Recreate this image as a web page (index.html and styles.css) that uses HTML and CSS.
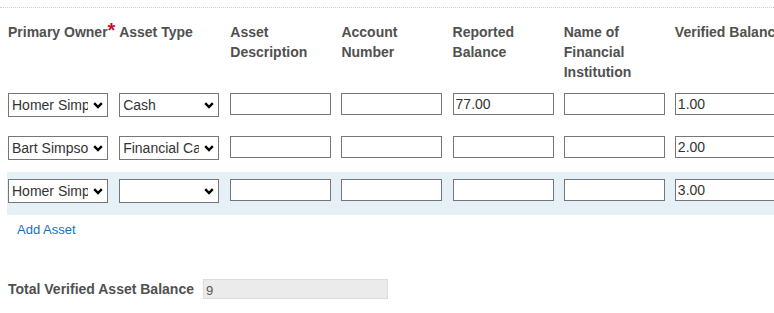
FILE: index.html
```html
<!DOCTYPE html>
<html lang="en">
<head>
<meta charset="utf-8">
<title>Assets</title>
<link rel="stylesheet" href="styles.css">
</head>
<body>
<div class="divider"></div>
<div class="grid head">
  <div class="hcell nowrap">Primary Owner<span class="req">*</span></div>
  <div class="hcell">Asset Type</div>
  <div class="hcell">Asset Description</div>
  <div class="hcell">Account Number</div>
  <div class="hcell">Reported Balance</div>
  <div class="hcell">Name of Financial Institution</div>
  <div class="hcell nowrap">Verified Balance</div>
</div>
<div class="grid row">
  <select class="sel"><option>Homer Simpson</option></select>
  <select class="sel"><option>Cash</option></select>
  <input class="txt" type="text" value="">
  <input class="txt" type="text" value="">
  <input class="txt" type="text" value="77.00">
  <input class="txt" type="text" value="">
  <input class="txt wide" type="text" value="1.00">
</div>
<div class="grid row">
  <select class="sel"><option>Bart Simpson</option></select>
  <select class="sel"><option>Financial Card</option></select>
  <input class="txt" type="text" value="">
  <input class="txt" type="text" value="">
  <input class="txt" type="text" value="">
  <input class="txt" type="text" value="">
  <input class="txt wide" type="text" value="2.00">
</div>
<div class="grid row active">
  <select class="sel"><option>Homer Simpson</option></select>
  <select class="sel"><option></option></select>
  <input class="txt" type="text" value="">
  <input class="txt" type="text" value="">
  <input class="txt" type="text" value="">
  <input class="txt" type="text" value="">
  <input class="txt wide" type="text" value="3.00">
</div>
<div class="add"><a class="add-link" href="#">Add Asset</a></div>
<div class="total">
  <span class="total-label">Total Verified Asset Balance</span>
  <input class="total-input" type="text" value="9" readonly>
</div>
</body>
</html>
```

FILE: styles.css
```css
html, body {
  margin: 0;
  padding: 0;
  overflow: hidden;
  background: #fff;
  font-family: "Liberation Sans", Arial, sans-serif;
}

.divider {
  margin-top: 7px;
  border-top: 1px dotted #cfcfcf;
  width: 100%;
}

.grid {
  display: grid;
  grid-template-columns: repeat(6, 111.15px) 200px;
  margin-left: 7px;
  padding-left: 1px;
  width: 1000px;
}

.head {
  padding-top: 14px;
  padding-bottom: 4px;
  height: 60px;
  align-items: start;
}

.hcell {
  font-size: 14px;
  font-weight: bold;
  line-height: 20px;
  color: #505050;
  padding-right: 7px;
}

.nowrap {
  white-space: nowrap;
}

.req {
  color: #c8102e;
  font-size: 20px;
  line-height: 0;
}

.row {
  height: 43px;
  box-sizing: border-box;
  padding-top: 7px;
  align-items: start;
}

.active {
  background: #e5f1f6;
}

.sel {
  -webkit-appearance: none;
  appearance: none;
  box-sizing: border-box;
  width: 100px;
  height: 24px;
  margin: 0;
  border: 1px solid #767676;
  border-radius: 0;
  padding: 0 19px 0 3px;
  font-family: "Liberation Sans", Arial, sans-serif;
  font-size: 14px;
  color: #333;
  background: #fff url("data:image/svg+xml;utf8,<svg xmlns='http://www.w3.org/2000/svg' width='10' height='7' viewBox='0 0 10 7'><path d='M1.2 1.2 L5 5 L8.8 1.2' fill='none' stroke='black' stroke-width='2.4'/></svg>") no-repeat right 4px center;
}

.txt {
  box-sizing: border-box;
  width: 101px;
  height: 22px;
  margin: 0;
  border: 1px solid #767676;
  border-radius: 0;
  padding: 0 2px;
  font-family: "Liberation Sans", Arial, sans-serif;
  font-size: 14px;
  color: #333;
  background: #fff;
  outline: none;
}

.wide {
  width: 140px;
}

.add {
  margin-top: 4px;
  padding-left: 17px;
  line-height: 20px;
}

.add-link {
  font-size: 13px;
  color: #1a6fc4;
  text-decoration: none;
}

.total {
  display: flex;
  align-items: center;
  margin-top: 39px;
  padding-left: 8px;
  gap: 9px;
}

.total-label {
  font-size: 14px;
  font-weight: bold;
  color: #505050;
}

.total-input {
  box-sizing: border-box;
  width: 185px;
  height: 20px;
  margin: 0;
  border: 1px solid #dcdcdc;
  border-radius: 0;
  background: #ebebeb;
  padding: 2px 2px 0;
  font-family: "Liberation Sans", Arial, sans-serif;
  font-size: 13px;
  color: #555;
  outline: none;
}
```
